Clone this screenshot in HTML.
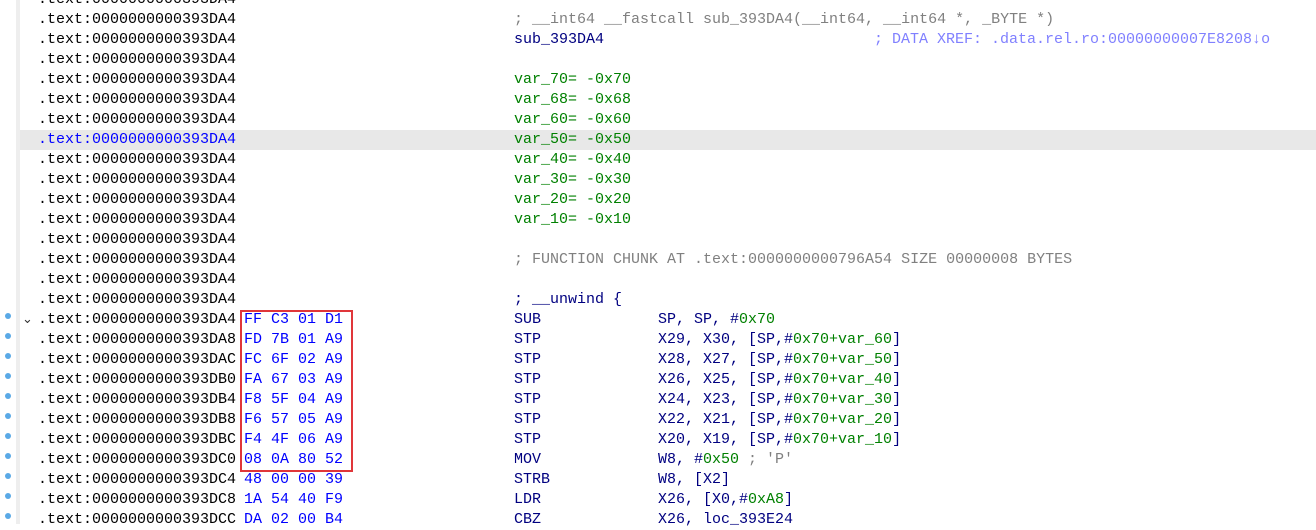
<!DOCTYPE html>
<html><head><meta charset="utf-8"><style>
body{margin:0;width:1316px;height:524px;overflow:hidden;background:#fff;position:relative;font-family:"Liberation Mono",monospace;font-size:15px;}
.r{position:absolute;left:0;width:1316px;height:20px;line-height:20px;white-space:pre;}
.r span{position:absolute;top:0}
.a{left:38px;color:#000}
.h{left:244px;color:#0000ff}
.m{left:514px;color:#000080}
.o{left:658px;color:#000080}
.g{color:#008000}
.c{color:#808080}
.x{color:#8080ff}
.gut{position:absolute;left:16px;top:0;width:4px;height:524px;background:#eeeeee}
.hl{position:absolute;left:20px;top:130px;width:1296px;height:20px;background:#e8e8e8}
.dot{position:absolute;left:5px;width:6px;height:6px;border-radius:50%;background:#5aa9e6}
.box{position:absolute;left:240px;top:310px;width:109px;height:158px;border:2px solid #e0363a}
</style></head><body>
<div class="gut"></div><div class="hl"></div>
<div class="r" style="top:-10px"><span class="a">.text:0000000000393DA4</span></div>
<div class="r" style="top:10px"><span class="a">.text:0000000000393DA4</span><span class="m c">; __int64 __fastcall sub_393DA4(__int64, __int64 *, _BYTE *)</span></div>
<div class="r" style="top:30px"><span class="a">.text:0000000000393DA4</span><span class="m">sub_393DA4</span><span class="x" style="left:874px">; DATA XREF: .data.rel.ro:00000000007E8208↓o</span></div>
<div class="r" style="top:50px"><span class="a">.text:0000000000393DA4</span></div>
<div class="r" style="top:70px"><span class="a">.text:0000000000393DA4</span><span class="m g">var_70= -0x70</span></div>
<div class="r" style="top:90px"><span class="a">.text:0000000000393DA4</span><span class="m g">var_68= -0x68</span></div>
<div class="r" style="top:110px"><span class="a">.text:0000000000393DA4</span><span class="m g">var_60= -0x60</span></div>
<div class="r" style="top:130px"><span class="a" style="color:#0000ff">.text:0000000000393DA4</span><span class="m g">var_50= -0x50</span></div>
<div class="r" style="top:150px"><span class="a">.text:0000000000393DA4</span><span class="m g">var_40= -0x40</span></div>
<div class="r" style="top:170px"><span class="a">.text:0000000000393DA4</span><span class="m g">var_30= -0x30</span></div>
<div class="r" style="top:190px"><span class="a">.text:0000000000393DA4</span><span class="m g">var_20= -0x20</span></div>
<div class="r" style="top:210px"><span class="a">.text:0000000000393DA4</span><span class="m g">var_10= -0x10</span></div>
<div class="r" style="top:230px"><span class="a">.text:0000000000393DA4</span></div>
<div class="r" style="top:250px"><span class="a">.text:0000000000393DA4</span><span class="m c">; FUNCTION CHUNK AT .text:0000000000796A54 SIZE 00000008 BYTES</span></div>
<div class="r" style="top:270px"><span class="a">.text:0000000000393DA4</span></div>
<div class="r" style="top:290px"><span class="a">.text:0000000000393DA4</span><span class="m">; __unwind {</span></div>
<div class="r" style="top:310px"><span style="left:22px;color:#333;font-size:13px">⌄</span><span class="a">.text:0000000000393DA4</span><span class="h">FF C3 01 D1</span><span class="m">SUB</span><span class="o">SP, SP, #<b class="g" style="font-weight:normal">0x70</b></span></div>
<div class="r" style="top:330px"><span class="a">.text:0000000000393DA8</span><span class="h">FD 7B 01 A9</span><span class="m">STP</span><span class="o">X29, X30, [SP,#<i class="g" style="font-style:normal">0x70+var_60</i>]</span></div>
<div class="r" style="top:350px"><span class="a">.text:0000000000393DAC</span><span class="h">FC 6F 02 A9</span><span class="m">STP</span><span class="o">X28, X27, [SP,#<i class="g" style="font-style:normal">0x70+var_50</i>]</span></div>
<div class="r" style="top:370px"><span class="a">.text:0000000000393DB0</span><span class="h">FA 67 03 A9</span><span class="m">STP</span><span class="o">X26, X25, [SP,#<i class="g" style="font-style:normal">0x70+var_40</i>]</span></div>
<div class="r" style="top:390px"><span class="a">.text:0000000000393DB4</span><span class="h">F8 5F 04 A9</span><span class="m">STP</span><span class="o">X24, X23, [SP,#<i class="g" style="font-style:normal">0x70+var_30</i>]</span></div>
<div class="r" style="top:410px"><span class="a">.text:0000000000393DB8</span><span class="h">F6 57 05 A9</span><span class="m">STP</span><span class="o">X22, X21, [SP,#<i class="g" style="font-style:normal">0x70+var_20</i>]</span></div>
<div class="r" style="top:430px"><span class="a">.text:0000000000393DBC</span><span class="h">F4 4F 06 A9</span><span class="m">STP</span><span class="o">X20, X19, [SP,#<i class="g" style="font-style:normal">0x70+var_10</i>]</span></div>
<div class="r" style="top:450px"><span class="a">.text:0000000000393DC0</span><span class="h">08 0A 80 52</span><span class="m">MOV</span><span class="o">W8, #<i class="g" style="font-style:normal">0x50</i> <i class="c" style="font-style:normal">; 'P'</i></span></div>
<div class="r" style="top:470px"><span class="a">.text:0000000000393DC4</span><span class="h">48 00 00 39</span><span class="m">STRB</span><span class="o">W8, [X2]</span></div>
<div class="r" style="top:490px"><span class="a">.text:0000000000393DC8</span><span class="h">1A 54 40 F9</span><span class="m">LDR</span><span class="o">X26, [X0,#<i class="g" style="font-style:normal">0xA8</i>]</span></div>
<div class="r" style="top:510px"><span class="a">.text:0000000000393DCC</span><span class="h">DA 02 00 B4</span><span class="m">CBZ</span><span class="o">X26, loc_393E24</span></div>
<div class="dot" style="top:313px"></div><div class="dot" style="top:333px"></div><div class="dot" style="top:353px"></div><div class="dot" style="top:373px"></div><div class="dot" style="top:393px"></div><div class="dot" style="top:413px"></div><div class="dot" style="top:433px"></div><div class="dot" style="top:453px"></div><div class="dot" style="top:473px"></div><div class="dot" style="top:493px"></div><div class="dot" style="top:513px"></div>
<div class="box"></div>
</body></html>
